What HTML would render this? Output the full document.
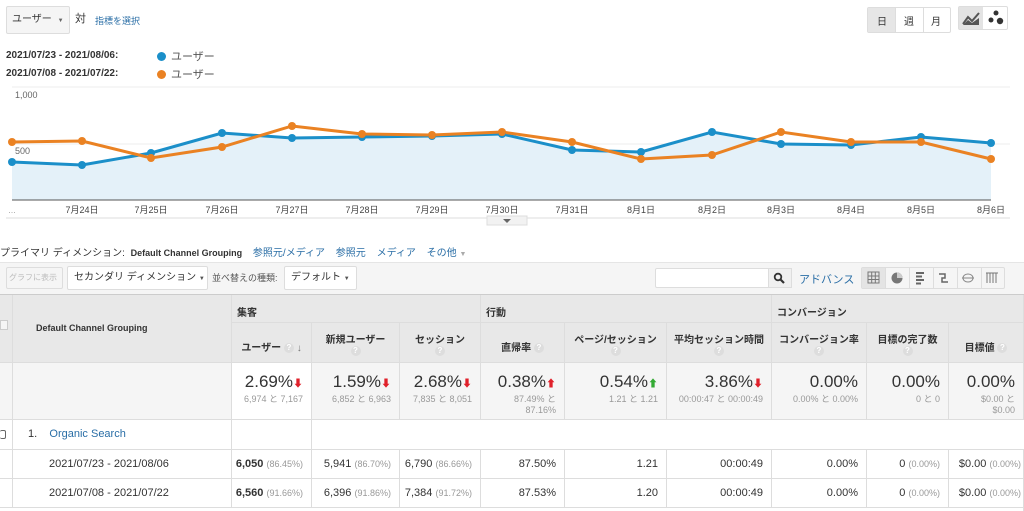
<!DOCTYPE html>
<html><head><meta charset="utf-8"><style>
*{box-sizing:border-box;margin:0;padding:0}
body{width:1024px;height:511px;overflow:hidden;background:#fff;font-family:"Liberation Sans","Noto Sans CJK JP",sans-serif;color:#333;position:relative;font-size:11px;white-space:nowrap}
.a{position:absolute}
.btn{position:absolute;border:1px solid #ddd;border-radius:2px;background:#f7f7f7}
.link{color:#2a6ea6}
.c{position:absolute;border-right:1px solid #ddd;border-bottom:1px solid #ddd}
.hd{background:#e8e8e8;font-weight:bold;font-size:10px;color:#333;text-align:center}
.big{font-size:17px;color:#333;text-align:right}
.sm{font-size:9px;color:#999;text-align:right}
.num{text-align:right;font-size:11px;padding-right:8px;line-height:29px}
.g{color:#999;font-size:9px}
.q{display:inline-block;width:10px;height:10px;border-radius:50%;background:#ddd;color:#fff;font-size:8px;line-height:10px;text-align:center;vertical-align:middle}
.dn{color:#e0202a;font-size:10px}
.up{color:#3a3;font-size:10px}
.dot{display:inline-block;width:9px;height:9px;border-radius:50%;margin-right:5px;vertical-align:-1px}
</style></head><body>
<div class="btn" style="left:6px;top:6px;width:64px;height:28px;background:#f5f5f5;font-size:10px;line-height:26px;padding-left:5px">ユーザー <span style="font-size:6px;color:#666;margin-left:3px">▼</span></div>
<div class="a" style="left:75px;top:10px;font-size:11px">対</div>
<div class="a link" style="left:95px;top:14px;font-size:9px">指標を選択</div>
<div class="a" style="left:6px;top:50px;font-weight:bold;font-size:10px">2021/07/23 - 2021/08/06:</div>
<div class="a" style="left:6px;top:68px;font-weight:bold;font-size:10px">2021/07/08 - 2021/07/22:</div>
<div class="a" style="left:157px;top:48px;font-size:11px;color:#555"><span class="dot" style="background:#1b8fc9"></span>ユーザー</div>
<div class="a" style="left:157px;top:66px;font-size:11px;color:#555"><span class="dot" style="background:#ea8223"></span>ユーザー</div>
<div class="btn" style="left:867px;top:7px;width:84px;height:26px;background:#fff"></div>
<div class="a" style="left:868px;top:8px;width:27px;height:24px;background:#e6e6e6"></div>
<div class="a" style="left:877px;top:13px;font-size:10px">日</div>
<div class="a" style="left:904px;top:13px;font-size:10px">週</div>
<div class="a" style="left:931px;top:13px;font-size:10px">月</div>
<div class="a" style="left:895px;top:8px;width:1px;height:24px;background:#ddd"></div>
<div class="a" style="left:923px;top:8px;width:1px;height:24px;background:#ddd"></div>
<div class="btn" style="left:958px;top:6px;width:50px;height:24px;background:#fff"></div>
<div class="a" style="left:959px;top:7px;width:24px;height:22px;background:#e3e3e3"></div>
<svg class="a" style="left:960px;top:9px" width="46" height="18"><path d="M3 15 L8 8 L12 12 L19 4" stroke="#555" stroke-width="2" fill="none"/><path d="M3 16 L8 11 L12 14 L19 9 L19 16Z" fill="#555"/><circle cx="36" cy="4" r="2.5" fill="#333"/><circle cx="31" cy="11" r="2.5" fill="#333"/><circle cx="40" cy="12" r="3.2" fill="#333"/></svg>
<svg class="a" style="left:0;top:80px" width="1024" height="150">
<line x1="12" y1="7" x2="1010" y2="7" stroke="#eee"/>
<line x1="12" y1="64" x2="1010" y2="64" stroke="#eee"/>
<text x="15" y="18" font-size="9" fill="#666" font-family="Liberation Sans">1,000</text>
<text x="15" y="74" font-size="9" fill="#666" font-family="Liberation Sans">500</text>
<path d="M12 82 L82 85 L151 73 L222 53 L292 58 L362 57 L432 56 L502 54 L572 70 L641 72 L712 52 L781 64 L851 65 L921 57 L991 63 L991 120 L12 120Z" fill="#e4f1f9"/>
<line x1="12" y1="120" x2="991" y2="120" stroke="#555"/>
<polyline points="12,82 82,85 151,73 222,53 292,58 362,57 432,56 502,54 572,70 641,72 712,52 781,64 851,65 921,57 991,63" fill="none" stroke="#1b8fc9" stroke-width="3"/>
<polyline points="12,62 82,61 151,78 222,67 292,46 362,54 432,55 502,52 572,62 641,79 712,75 781,52 851,62 921,62 991,79" fill="none" stroke="#ea8223" stroke-width="3"/>
<g fill="#1b8fc9"><circle cx="12" cy="82" r="4"/><circle cx="82" cy="85" r="4"/><circle cx="151" cy="73" r="4"/><circle cx="222" cy="53" r="4"/><circle cx="292" cy="58" r="4"/><circle cx="362" cy="57" r="4"/><circle cx="432" cy="56" r="4"/><circle cx="502" cy="54" r="4"/><circle cx="572" cy="70" r="4"/><circle cx="641" cy="72" r="4"/><circle cx="712" cy="52" r="4"/><circle cx="781" cy="64" r="4"/><circle cx="851" cy="65" r="4"/><circle cx="921" cy="57" r="4"/><circle cx="991" cy="63" r="4"/></g>
<g fill="#ea8223"><circle cx="12" cy="62" r="4"/><circle cx="82" cy="61" r="4"/><circle cx="151" cy="78" r="4"/><circle cx="222" cy="67" r="4"/><circle cx="292" cy="46" r="4"/><circle cx="362" cy="54" r="4"/><circle cx="432" cy="55" r="4"/><circle cx="502" cy="52" r="4"/><circle cx="572" cy="62" r="4"/><circle cx="641" cy="79" r="4"/><circle cx="712" cy="75" r="4"/><circle cx="781" cy="52" r="4"/><circle cx="851" cy="62" r="4"/><circle cx="921" cy="62" r="4"/><circle cx="991" cy="79" r="4"/></g>
<g font-size="9" fill="#444" text-anchor="middle" font-family="Liberation Sans,Noto Sans CJK JP,sans-serif">
<text x="12" y="133" fill="#aaa">...</text><text x="82" y="133">7月24日</text><text x="151" y="133">7月25日</text><text x="222" y="133">7月26日</text><text x="292" y="133">7月27日</text><text x="362" y="133">7月28日</text><text x="432" y="133">7月29日</text><text x="502" y="133">7月30日</text><text x="572" y="133">7月31日</text><text x="641" y="133">8月1日</text><text x="712" y="133">8月2日</text><text x="781" y="133">8月3日</text><text x="851" y="133">8月4日</text><text x="921" y="133">8月5日</text><text x="991" y="133">8月6日</text></g>
<line x1="6" y1="138" x2="1010" y2="138" stroke="#ddd"/>
<rect x="487" y="136" width="40" height="9" fill="#f2f2f2" stroke="#ddd"/><path d="M503 139 L511 139 L507 143Z" fill="#666"/>
</svg>
<div class="a" style="left:0;top:244px;font-size:10px;color:#333">プライマリ ディメンション: <b style="font-size:9px;margin-left:3px">Default Channel Grouping</b> <span class="link" style="margin-left:8px">参照元/メディア</span> <span class="link" style="margin-left:8px">参照元</span> <span class="link" style="margin-left:8px">メディア</span> <span class="link" style="margin-left:8px">その他</span> <span style="color:#aaa;font-size:7px">▼</span></div>
<div class="a" style="left:0;top:262px;width:1024px;height:33px;background:#f5f5f5;border-top:1px solid #e5e5e5"></div>
<div class="btn" style="left:6px;top:267px;width:57px;height:22px;color:#bbb;font-size:8px;line-height:20px;padding-left:2px;background:#f5f5f5;overflow:hidden">グラフに表示</div>
<div class="btn" style="left:67px;top:266px;width:141px;height:24px;background:#fff;font-size:10px;line-height:22px;padding-left:6px;overflow:hidden">セカンダリ ディメンション <span style="font-size:6px;color:#555">▼</span></div>
<div class="a" style="left:212px;top:271px;font-size:9px;color:#555">並べ替えの種類:</div>
<div class="btn" style="left:284px;top:266px;width:73px;height:24px;background:#fff;font-size:10px;line-height:22px;padding-left:6px">デフォルト <span style="font-size:6px;color:#555">▼</span></div>
<div class="btn" style="left:655px;top:268px;width:137px;height:20px;background:#fff"></div>
<div class="a" style="left:768px;top:268px;width:24px;height:20px;background:#f0f0f0;border:1px solid #ddd"></div>
<svg class="a" style="left:773px;top:272px" width="14" height="12"><circle cx="5" cy="5" r="3.3" stroke="#333" stroke-width="1.8" fill="none"/><line x1="7.5" y1="7.5" x2="11" y2="11" stroke="#333" stroke-width="2.2"/></svg>
<div class="a link" style="left:799px;top:271px;font-size:11px">アドバンス</div>
<div class="btn" style="left:861px;top:267px;width:144px;height:22px;background:#f5f5f5"></div>
<div class="a" style="left:862px;top:268px;width:23px;height:20px;background:#e4e4e4"></div>
<svg class="a" style="left:862px;top:268px" width="142" height="20">
<g stroke="#777" fill="none"><rect x="6" y="4" width="11" height="11"/><path d="M6 8H17M6 11.5H17M9.7 4V15M13.3 4V15"/></g>
<line x1="23.5" y1="0" x2="23.5" y2="20" stroke="#ddd"/><circle cx="35" cy="10" r="5.5" fill="#777"/><path d="M35 10V4.5A5.5 5.5 0 0 1 40.5 10Z" fill="#ccc"/>
<line x1="47.5" y1="0" x2="47.5" y2="20" stroke="#ddd"/><path d="M54 5H62M54 8.5H60M54 12H62M54 15.5H59" stroke="#666" stroke-width="2"/>
<line x1="71.5" y1="0" x2="71.5" y2="20" stroke="#ddd"/><path d="M77 6H83V10H80V14H86" stroke="#666" stroke-width="1.5" fill="none"/>
<line x1="95.5" y1="0" x2="95.5" y2="20" stroke="#ddd"/><ellipse cx="106" cy="10" rx="5" ry="4" fill="none" stroke="#888"/><path d="M100 10H112" stroke="#888"/>
<line x1="119.5" y1="0" x2="119.5" y2="20" stroke="#ddd"/><path d="M124 5H136M125 5V15M128 5V15M131 5V15M134 5V15" stroke="#777"/>
</svg>
<!-- table -->
<div class="a" style="left:0;top:294px;width:1024px;height:1px;background:#ccc"></div>
<div class="c hd" style="left:0;top:295px;width:13px;height:68px"></div>
<div class="a" style="left:0;top:320px;width:8px;height:10px;border:1px solid #ccc;background:#f5f5f5"></div>
<div class="c hd" style="left:13px;top:295px;width:219px;height:68px;line-height:66px;font-size:9px;text-align:left;padding-left:23px">Default Channel Grouping</div>
<div class="c hd" style="left:232px;top:295px;width:249px;height:28px;text-align:left;padding:9px 5px">集客</div>
<div class="c hd" style="left:481px;top:295px;width:291px;height:28px;text-align:left;padding:9px 5px">行動</div>
<div class="c hd" style="left:772px;top:295px;width:252px;height:28px;text-align:left;padding:9px 5px">コンバージョン</div>
<div class="c hd" style="left:232px;top:323px;width:80px;height:40px;padding-top:16px">ユーザー <span class="q">?</span> <span style="color:#777">↓</span></div>
<div class="c hd" style="left:312px;top:323px;width:88px;height:40px;padding-top:8px">新規ユーザー<br><span class="q">?</span></div>
<div class="c hd" style="left:400px;top:323px;width:81px;height:40px;padding-top:8px">セッション<br><span class="q">?</span></div>
<div class="c hd" style="left:481px;top:323px;width:84px;height:40px;padding-top:16px">直帰率 <span class="q">?</span></div>
<div class="c hd" style="left:565px;top:323px;width:102px;height:40px;padding-top:8px">ページ/セッション<br><span class="q">?</span></div>
<div class="c hd" style="left:667px;top:323px;width:105px;height:40px;padding-top:8px">平均セッション時間<br><span class="q">?</span></div>
<div class="c hd" style="left:772px;top:323px;width:95px;height:40px;padding-top:8px">コンバージョン率<br><span class="q">?</span></div>
<div class="c hd" style="left:867px;top:323px;width:82px;height:40px;padding-top:8px">目標の完了数<br><span class="q">?</span></div>
<div class="c hd" style="left:949px;top:323px;width:75px;height:40px;padding-top:16px">目標値 <span class="q">?</span></div>
<!-- totals -->
<div class="c" style="left:0;top:363px;width:13px;height:57px;background:#f5f5f5"></div>
<div class="c" style="left:13px;top:363px;width:219px;height:57px;background:#f5f5f5"></div>
<div class="c" style="left:232px;top:363px;width:80px;height:57px;background:#fff;padding:9px 8px 0 0"><div class="big">2.69%<span class="dn">⬇</span></div><div class="sm">6,974 と 7,167</div></div>
<div class="c" style="left:312px;top:363px;width:88px;height:57px;background:#f5f5f5;padding:9px 8px 0 0"><div class="big">1.59%<span class="dn">⬇</span></div><div class="sm">6,852 と 6,963</div></div>
<div class="c" style="left:400px;top:363px;width:81px;height:57px;background:#f5f5f5;padding:9px 8px 0 0"><div class="big">2.68%<span class="dn">⬇</span></div><div class="sm">7,835 と 8,051</div></div>
<div class="c" style="left:481px;top:363px;width:84px;height:57px;background:#f5f5f5;padding:9px 8px 0 0"><div class="big">0.38%<span class="dn">⬆</span></div><div class="sm">87.49% と<br>87.16%</div></div>
<div class="c" style="left:565px;top:363px;width:102px;height:57px;background:#f5f5f5;padding:9px 8px 0 0"><div class="big">0.54%<span class="up">⬆</span></div><div class="sm">1.21 と 1.21</div></div>
<div class="c" style="left:667px;top:363px;width:105px;height:57px;background:#f5f5f5;padding:9px 8px 0 0"><div class="big">3.86%<span class="dn">⬇</span></div><div class="sm">00:00:47 と 00:00:49</div></div>
<div class="c" style="left:772px;top:363px;width:95px;height:57px;background:#f5f5f5;padding:9px 8px 0 0"><div class="big">0.00%</div><div class="sm">0.00% と 0.00%</div></div>
<div class="c" style="left:867px;top:363px;width:82px;height:57px;background:#f5f5f5;padding:9px 8px 0 0"><div class="big">0.00%</div><div class="sm">0 と 0</div></div>
<div class="c" style="left:949px;top:363px;width:75px;height:57px;background:#f5f5f5;padding:9px 8px 0 0"><div class="big">0.00%</div><div class="sm">$0.00 と<br>$0.00</div></div>
<!-- organic row -->
<div class="c" style="left:0;top:420px;width:13px;height:30px"></div>
<div class="a" style="left:0;top:430px;width:6px;height:9px;border:1px solid #666;border-left:none;border-radius:2px"></div>
<div class="c" style="left:13px;top:420px;width:219px;height:30px;line-height:29px;padding-left:15px;font-size:11px">1.&nbsp;&nbsp;&nbsp;&nbsp;<span class="link">Organic Search</span></div>
<div class="c" style="left:232px;top:420px;width:80px;height:30px"></div>
<div class="a" style="left:312px;top:449px;width:712px;height:1px;background:#ddd"></div>
<!-- rows -->
<div class="c" style="left:0;top:450px;width:13px;height:29px"></div>
<div class="c" style="left:13px;top:450px;width:219px;height:29px;line-height:28px;padding-left:36px">2021/07/23 - 2021/08/06</div>
<div class="c num" style="left:232px;top:450px;width:80px;height:29px"><b>6,050</b> <span class="g">(86.45%)</span></div>
<div class="c num" style="left:312px;top:450px;width:88px;height:29px">5,941 <span class="g">(86.70%)</span></div>
<div class="c num" style="left:400px;top:450px;width:81px;height:29px">6,790 <span class="g">(86.66%)</span></div>
<div class="c num" style="left:481px;top:450px;width:84px;height:29px">87.50%</div>
<div class="c num" style="left:565px;top:450px;width:102px;height:29px">1.21</div>
<div class="c num" style="left:667px;top:450px;width:105px;height:29px">00:00:49</div>
<div class="c num" style="left:772px;top:450px;width:95px;height:29px">0.00%</div>
<div class="c num" style="left:867px;top:450px;width:82px;height:29px">0 <span class="g">(0.00%)</span></div>
<div class="c num" style="left:949px;top:450px;width:75px;height:29px;padding-right:2px">$0.00 <span class="g">(0.00%)</span></div>
<div class="c" style="left:0;top:479px;width:13px;height:29px"></div>
<div class="c" style="left:13px;top:479px;width:219px;height:29px;line-height:28px;padding-left:36px">2021/07/08 - 2021/07/22</div>
<div class="c num" style="left:232px;top:479px;width:80px;height:29px"><b>6,560</b> <span class="g">(91.66%)</span></div>
<div class="c num" style="left:312px;top:479px;width:88px;height:29px">6,396 <span class="g">(91.86%)</span></div>
<div class="c num" style="left:400px;top:479px;width:81px;height:29px">7,384 <span class="g">(91.72%)</span></div>
<div class="c num" style="left:481px;top:479px;width:84px;height:29px">87.53%</div>
<div class="c num" style="left:565px;top:479px;width:102px;height:29px">1.20</div>
<div class="c num" style="left:667px;top:479px;width:105px;height:29px">00:00:49</div>
<div class="c num" style="left:772px;top:479px;width:95px;height:29px">0.00%</div>
<div class="c num" style="left:867px;top:479px;width:82px;height:29px">0 <span class="g">(0.00%)</span></div>
<div class="c num" style="left:949px;top:479px;width:75px;height:29px;padding-right:2px">$0.00 <span class="g">(0.00%)</span></div>
<div class="c" style="left:0;top:508px;width:1024px;height:3px;border-bottom:none"></div>
</body></html>
